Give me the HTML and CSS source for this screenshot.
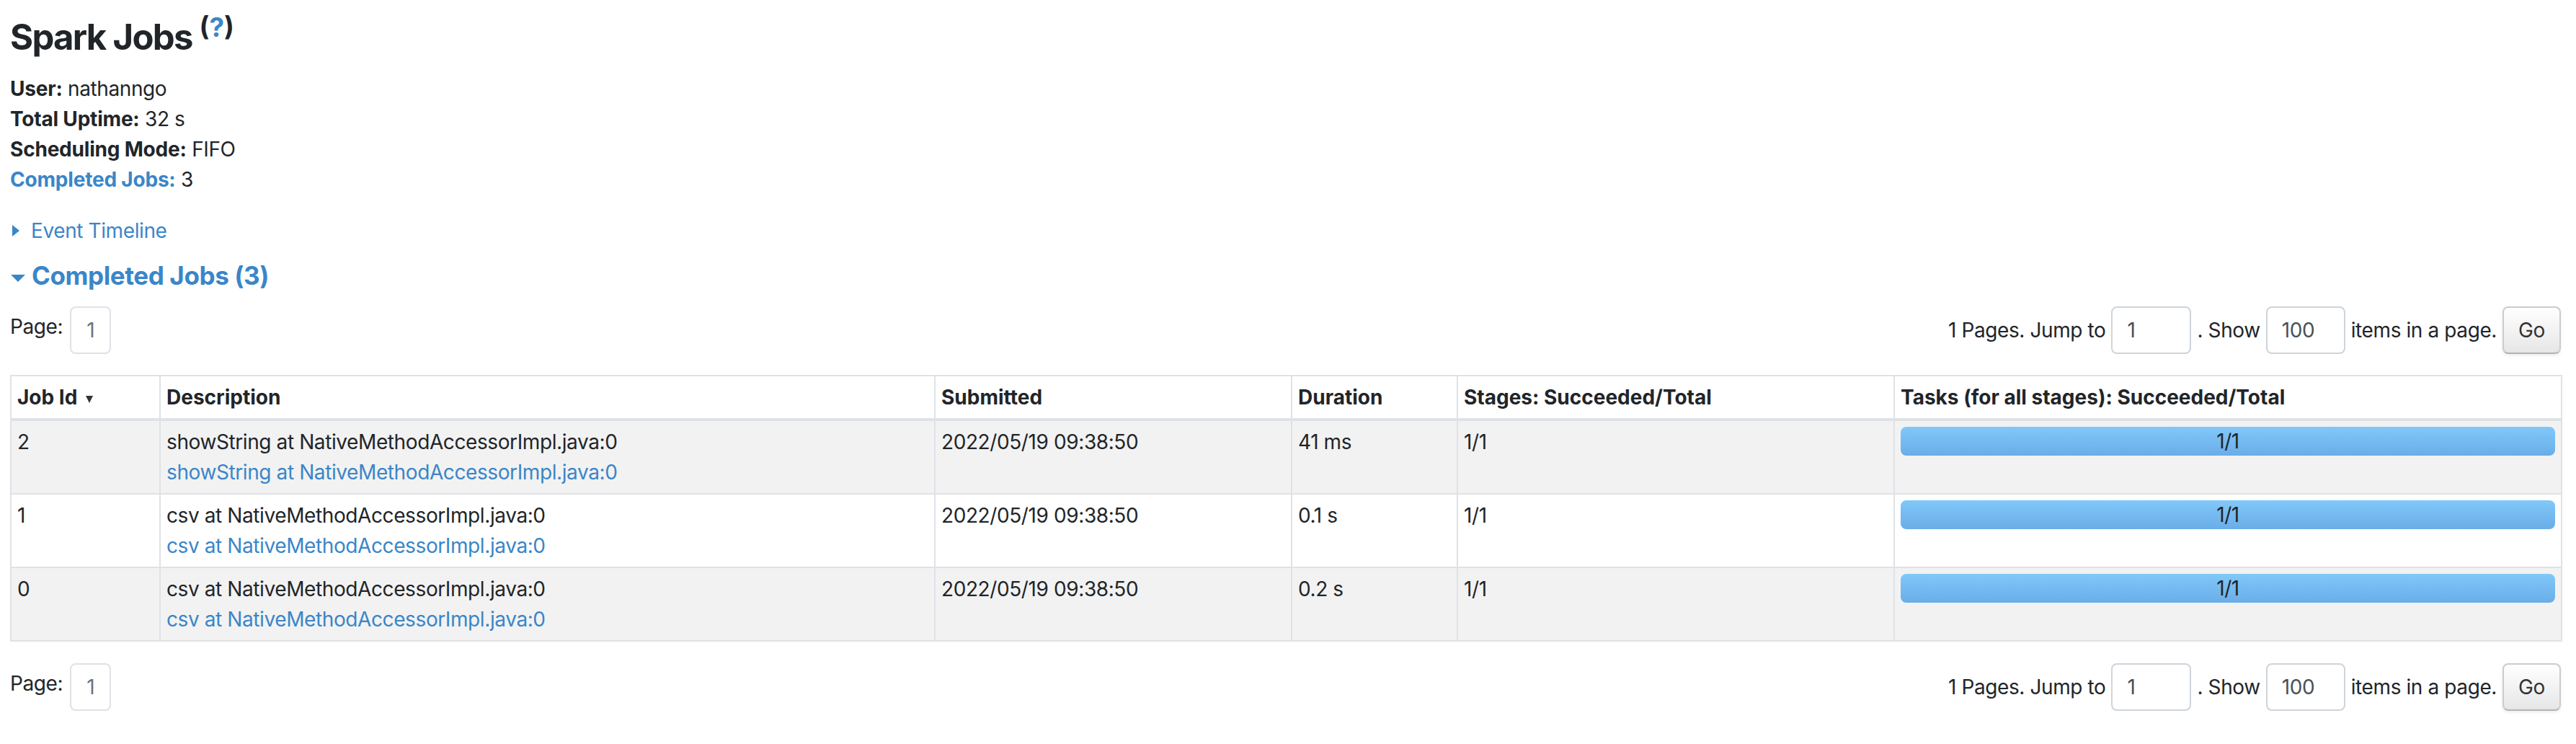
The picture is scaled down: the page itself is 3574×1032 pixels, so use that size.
FILE: index.html
```html
<!DOCTYPE html>
<html lang="en">
<head>
<meta charset="utf-8">
<title>Spark Jobs</title>
<link rel="stylesheet" href="styles.css">
</head>
<body>
<div class="page">
  <h3 class="title">Spark Jobs <sup>(<a class="help" href="#">?</a>)</sup></h3>

  <ul class="summary">
    <li><strong>User:</strong> nathanngo</li>
    <li><strong>Total Uptime:</strong> 32 s</li>
    <li><strong>Scheduling Mode:</strong> FIFO</li>
    <li><a href="#completed"><strong>Completed Jobs:</strong></a> 3</li>
  </ul>

  <div class="timeline">
    <span class="arrow-closed"></span>
    <a href="#">Event Timeline</a>
  </div>

  <h4 class="section" id="completed">
    <span class="arrow-open"></span>
    <a href="#">Completed Jobs (3)</a>
  </h4>

  <div class="pager">
    <span class="page-label">Page:</span>
    <span class="page-link">1</span>
    <div class="jump">
      <span>1 Pages. Jump to</span>
      <input class="field field-page" type="text" value="1">
      <span>. Show</span>
      <input class="field field-size" type="text" value="100">
      <span>items in a page.</span>
      <button class="go-btn" type="button">Go</button>
    </div>
  </div>

  <table class="jobs">
    <colgroup>
      <col class="c-id">
      <col class="c-desc">
      <col class="c-sub">
      <col class="c-dur">
      <col class="c-stages">
      <col class="c-tasks">
    </colgroup>
    <thead>
      <tr>
        <th>Job Id<span class="sort-arrow"></span></th>
        <th>Description</th>
        <th>Submitted</th>
        <th>Duration</th>
        <th>Stages: Succeeded/Total</th>
        <th>Tasks (for all stages): Succeeded/Total</th>
      </tr>
    </thead>
    <tbody>
      <tr>
        <td>2</td>
        <td><div>showString at NativeMethodAccessorImpl.java:0</div><a href="#">showString at NativeMethodAccessorImpl.java:0</a></td>
        <td>2022/05/19 09:38:50</td>
        <td>41 ms</td>
        <td>1/1</td>
        <td><div class="progress"><span class="progress-label">1/1</span><div class="bar" style="width:100%"></div></div></td>
      </tr>
      <tr>
        <td>1</td>
        <td><div>csv at NativeMethodAccessorImpl.java:0</div><a href="#">csv at NativeMethodAccessorImpl.java:0</a></td>
        <td>2022/05/19 09:38:50</td>
        <td>0.1 s</td>
        <td>1/1</td>
        <td><div class="progress"><span class="progress-label">1/1</span><div class="bar" style="width:100%"></div></div></td>
      </tr>
      <tr>
        <td>0</td>
        <td><div>csv at NativeMethodAccessorImpl.java:0</div><a href="#">csv at NativeMethodAccessorImpl.java:0</a></td>
        <td>2022/05/19 09:38:50</td>
        <td>0.2 s</td>
        <td>1/1</td>
        <td><div class="progress"><span class="progress-label">1/1</span><div class="bar" style="width:100%"></div></div></td>
      </tr>
    </tbody>
  </table>

  <div class="pager pager-bottom">
    <span class="page-label">Page:</span>
    <span class="page-link">1</span>
    <div class="jump">
      <span>1 Pages. Jump to</span>
      <input class="field field-page" type="text" value="1">
      <span>. Show</span>
      <input class="field field-size" type="text" value="100">
      <span>items in a page.</span>
      <button class="go-btn" type="button">Go</button>
    </div>
  </div>
</div>
</body>
</html>
```

FILE: styles.css
```css
html, body {
  margin: 0;
  padding: 0;
  background: #ffffff;
}

body {
  font-family: Inter, "Liberation Sans", "DejaVu Sans", sans-serif;
  font-size: 28px;
  line-height: 42px;
  color: #212529;
  letter-spacing: -0.4px;
}

a {
  color: #3a86c8;
  text-decoration: none;
}

.page {
  padding: 23px 21px 40px 14px;
}

.title {
  margin: 0;
  font-size: 49px;
  line-height: 58px;
  font-weight: 700;
  letter-spacing: -1.7px;
}

.title sup {
  font-size: 75%;
  line-height: 0;
  position: relative;
  top: -0.5em;
  vertical-align: baseline;
  letter-spacing: 0;
}

.summary {
  list-style: none;
  margin: 21px 0 0;
  padding: 0;
}

.summary strong {
  font-weight: 700;
  letter-spacing: -0.2px;
}

.timeline {
  margin-top: 29px;
  display: flex;
  align-items: center;
  height: 42px;
}

.arrow-closed {
  width: 0;
  height: 0;
  border-top: 8px solid transparent;
  border-bottom: 8px solid transparent;
  border-left: 10px solid #3a86c8;
  margin: 0 16px 0 3px;
}

.section {
  margin: 20px 0 0;
  font-size: 35px;
  line-height: 42px;
  font-weight: 700;
  display: flex;
  align-items: center;
}

.arrow-open {
  width: 0;
  height: 0;
  border-left: 10px solid transparent;
  border-right: 10px solid transparent;
  border-top: 10px solid #3a86c8;
  margin: 8px 9px 0 1px;
}

.pager {
  display: flex;
  align-items: center;
  height: 66px;
  margin-top: 22px;
}

.pager-bottom {
  margin-top: 30px;
}

.page-label {
  padding-bottom: 10px;
  margin-right: 10px;
}

.page-link {
  box-sizing: border-box;
  height: 66px;
  min-width: 57px;
  padding: 0 20px;
  border: 2px solid #dee2e6;
  border-radius: 8px;
  color: #6c757d;
  display: flex;
  align-items: center;
  justify-content: center;
}

.jump {
  margin-left: auto;
  display: flex;
  align-items: center;
  gap: 8px;
}

.field {
  box-sizing: border-box;
  height: 66px;
  border: 2px solid #ced4da;
  border-radius: 8px;
  padding: 0 20px;
  font: inherit;
  letter-spacing: inherit;
  color: #495057;
  background: #ffffff;
  outline: none;
}

.field-page {
  width: 111px;
}

.field-size {
  width: 110px;
}

.go-btn {
  box-sizing: border-box;
  width: 81px;
  height: 66px;
  padding: 0;
  font: inherit;
  letter-spacing: inherit;
  color: #333333;
  background: linear-gradient(#ffffff, #e6e6e6);
  border: 2px solid #cccccc;
  border-bottom-color: #b3b3b3;
  border-radius: 8px;
  box-shadow: 0 2px 4px rgba(0, 0, 0, 0.08);
}

.jobs {
  margin-top: 29px;
  border-collapse: collapse;
  table-layout: fixed;
  width: 3539px;
}

.c-id { width: 207px; }
.c-desc { width: 1075px; }
.c-sub { width: 495px; }
.c-dur { width: 230px; }
.c-stages { width: 606px; }
.c-tasks { width: 926px; }

.jobs th,
.jobs td {
  border: 2px solid #dee2e6;
  padding: 8px;
  vertical-align: top;
  text-align: left;
}

.jobs thead th {
  border-bottom-width: 4px;
  font-weight: 700;
  background: #ffffff;
  letter-spacing: 0;
}

.jobs tbody tr:nth-child(odd) td {
  background: #f2f2f2;
}

.sort-arrow {
  display: inline-block;
  width: 0;
  height: 0;
  border-left: 5px solid transparent;
  border-right: 5px solid transparent;
  border-top: 10px solid #333333;
  margin-left: 12px;
  vertical-align: 2px;
}

.progress {
  position: relative;
  height: 40px;
  border-radius: 8px;
  overflow: hidden;
}

.bar {
  height: 100%;
  background: linear-gradient(#80c8fa, #6aade8);
}

.progress-label {
  position: absolute;
  left: 0;
  right: 0;
  top: 0;
  text-align: center;
  line-height: 40px;
  color: #212529;
}
```
